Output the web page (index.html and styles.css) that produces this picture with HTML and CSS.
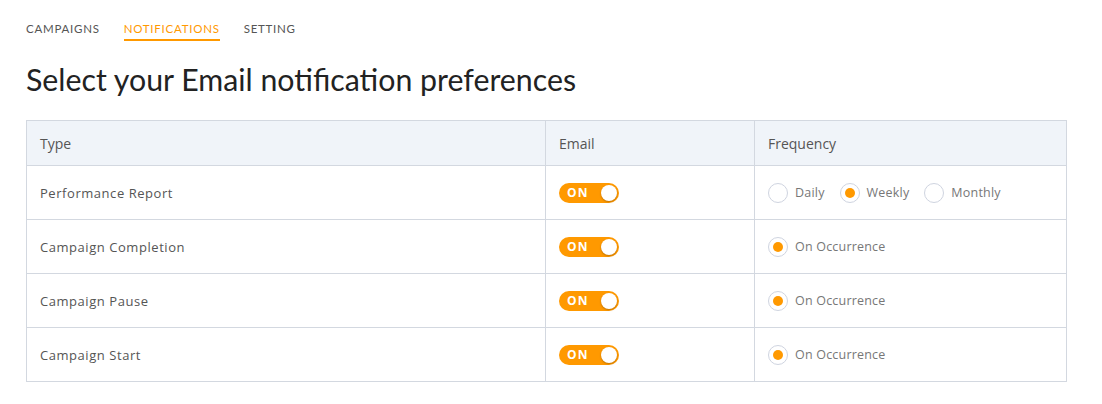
FILE: index.html
```html
<!DOCTYPE html>
<html lang="en">
<head>
  <meta charset="UTF-8">
  <title>Notification Preferences</title>
  <link rel="stylesheet" href="styles.css">
</head>
<body>
  <nav class="tabs">
    <a class="tab">CAMPAIGNS</a>
    <a class="tab active">NOTIFICATIONS</a>
    <a class="tab">SETTING</a>
  </nav>

  <h1>Select your Email notification preferences</h1>

  <table class="prefs">
    <colgroup>
      <col class="c-type">
      <col class="c-email">
      <col class="c-freq">
    </colgroup>
    <thead>
      <tr>
        <th>Type</th>
        <th>Email</th>
        <th>Frequency</th>
      </tr>
    </thead>
    <tbody>
      <tr>
        <td>Performance Report</td>
        <td><span class="toggle"><span class="toggle-label">ON</span><span class="knob"></span></span></td>
        <td>
          <div class="radios">
            <label class="radio"><span class="dot"></span>Daily</label>
            <label class="radio checked"><span class="dot"></span>Weekly</label>
            <label class="radio"><span class="dot"></span>Monthly</label>
          </div>
        </td>
      </tr>
      <tr>
        <td>Campaign Completion</td>
        <td><span class="toggle"><span class="toggle-label">ON</span><span class="knob"></span></span></td>
        <td><div class="radios"><label class="radio checked"><span class="dot"></span>On Occurrence</label></div></td>
      </tr>
      <tr>
        <td>Campaign Pause</td>
        <td><span class="toggle"><span class="toggle-label">ON</span><span class="knob"></span></span></td>
        <td><div class="radios"><label class="radio checked"><span class="dot"></span>On Occurrence</label></div></td>
      </tr>
      <tr>
        <td>Campaign Start</td>
        <td><span class="toggle"><span class="toggle-label">ON</span><span class="knob"></span></span></td>
        <td><div class="radios"><label class="radio checked"><span class="dot"></span>On Occurrence</label></div></td>
      </tr>
    </tbody>
  </table>
</body>
</html>
```

FILE: styles.css
```css
body {
  margin: 0;
  padding: 20px 26px;
  font-family: "Open Sans", Arial, sans-serif;
  color: #555;
  background: #fff;
}
.tabs {
  display: flex;
  gap: 24px;
  font-family: Lato, Arial, sans-serif;
}
.tab {
  font-size: 11.5px;
  letter-spacing: 0.75px;
  color: #555;
  padding: 2px 0 4px;
  border-bottom: 2px solid transparent;
}
.tab.active {
  color: #ff9900;
  border-bottom-color: #ff9900;
}
h1 {
  font-family: Lato, Arial, sans-serif;
  font-weight: 400;
  font-size: 30.3px;
  color: #222;
  margin: 20px 0 22px;
  line-height: 37px;
}
.prefs {
  width: 1041px;
  border-collapse: collapse;
  table-layout: fixed;
}
.c-type { width: 519px; }
.c-email { width: 209px; }
.prefs th, .prefs td {
  border: 1px solid #d3d8e0;
  text-align: left;
  padding: 0 13px;
}
.prefs th {
  background: #f0f4f9;
  height: 44px;
  font-weight: 400;
  font-size: 14px;
  color: #555;
}
.prefs td {
  height: 53px;
  font-size: 13px;
  letter-spacing: 0.55px;
  color: #555;
}
.toggle {
  display: inline-flex;
  align-items: center;
  justify-content: space-between;
  width: 60px;
  height: 20px;
  box-sizing: border-box;
  padding: 0 2px 0 8px;
  border-radius: 10px;
  background: #ff9900;
  vertical-align: middle;
}
.toggle-label {
  color: #fff;
  font-weight: 700;
  font-size: 12px;
  letter-spacing: 1.2px;
}
.knob {
  width: 16px;
  height: 16px;
  border-radius: 50%;
  background: #fff;
  box-shadow: 0 1px 2px rgba(0,0,0,0.25);
}
.radios {
  display: flex;
  gap: 15px;
}
.radio {
  display: inline-flex;
  align-items: center;
  gap: 7px;
  font-size: 12.5px;
  letter-spacing: 0.2px;
  color: #777;
}
.dot {
  width: 20px;
  height: 20px;
  box-sizing: border-box;
  border: 1px solid #cfd4e0;
  border-radius: 50%;
  display: inline-flex;
  align-items: center;
  justify-content: center;
}
.radio.checked .dot::after {
  content: "";
  width: 10px;
  height: 10px;
  border-radius: 50%;
  background: #ff9900;
}
```
